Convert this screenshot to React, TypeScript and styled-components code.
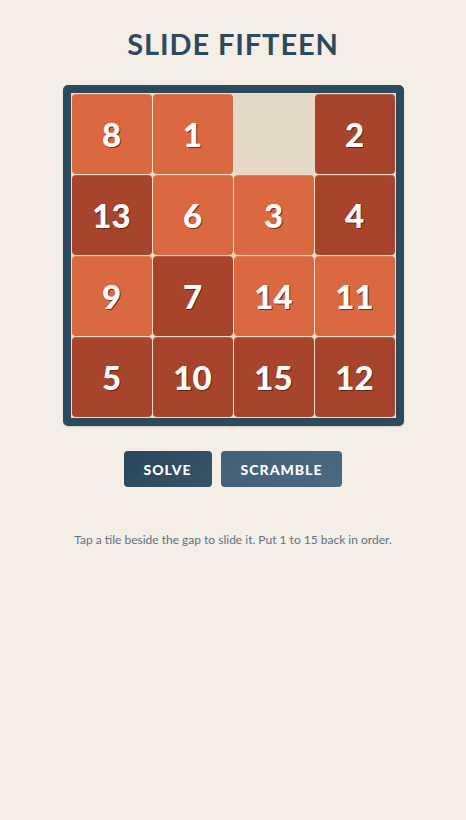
import React from "react";
import styled, { createGlobalStyle } from "styled-components";

const GlobalStyle = createGlobalStyle`
  html, body {
    margin: 0;
    padding: 0;
    background: #f4eee7;
  }
  body {
    font-family: Lato, "Open Sans", sans-serif;
  }
`;

const TILES: (number | null)[] = [8, 1, null, 2, 13, 6, 3, 4, 9, 7, 14, 11, 5, 10, 15, 12];

// darker tiles, as they appear in the picture
const DARK = new Set([2, 13, 4, 7, 5, 10, 15, 12]);

const Page = styled.div`
  display: flex;
  flex-direction: column;
  align-items: center;
  min-height: 820px;
  padding-top: 27px;
  box-sizing: border-box;
`;

const Title = styled.h1`
  margin: 0;
  font-size: 29px;
  font-weight: 700;
  letter-spacing: 0.9px;
  color: #2c4a5e;
  line-height: 34px;
`;

const Board = styled.div`
  margin-top: 24px;
  width: 341px;
  box-sizing: border-box;
  border: 8px solid #2c4a5e;
  border-radius: 5px;
  background: #efdcc4;
  padding: 1px;
  display: grid;
  grid-template-columns: repeat(4, 80px);
  grid-auto-rows: 80px;
  gap: 1px;
  box-shadow: 0 1px 2px rgba(0, 0, 0, 0.15);
`;

const Tile = styled.div<{ $dark?: boolean }>`
  display: flex;
  align-items: center;
  justify-content: center;
  border-radius: 4px;
  background: ${(p) => (p.$dark ? "#a8442c" : "#da6840")};
  box-shadow: inset 0 1px 0 rgba(255, 255, 255, 0.12);
  color: #fff;
  font-size: 33px;
  font-weight: 900;
  text-shadow: 1px 1px 0 rgba(80, 20, 10, 0.7);
  cursor: pointer;
`;

const Gap = styled.div`
  border-radius: 2px;
  background: #e4d8c7;
`;

const Controls = styled.div`
  margin-top: 25px;
  display: flex;
  gap: 9px;
`;

const Button = styled.button<{ $variant: "dark" | "light" }>`
  height: 36px;
  padding: 0 20px;
  border: none;
  border-radius: 4px;
  font-family: Lato, "Open Sans", sans-serif;
  font-size: 14px;
  font-weight: 900;
  letter-spacing: 1px;
  color: #fff;
  background: ${(p) =>
    p.$variant === "dark"
      ? "linear-gradient(135deg, #2a4659, #36546a)"
      : "linear-gradient(135deg, #40607a, #4a6a82)"};
  cursor: pointer;
`;

const Hint = styled.p`
  margin: 45px 0 0;
  font-size: 12px;
  color: #5f7180;
`;

export default function App() {
  return (
    <>
      <GlobalStyle />
      <Page>
        <Title>SLIDE FIFTEEN</Title>
        <Board>
          {TILES.map((n, i) =>
            n === null ? <Gap key={i} /> : (
              <Tile key={i} $dark={DARK.has(n)}>
                {n}
              </Tile>
            )
          )}
        </Board>
        <Controls>
          <Button $variant="dark">SOLVE</Button>
          <Button $variant="light">SCRAMBLE</Button>
        </Controls>
        <Hint>Tap a tile beside the gap to slide it. Put 1 to 15 back in order.</Hint>
      </Page>
    </>
  );
}
